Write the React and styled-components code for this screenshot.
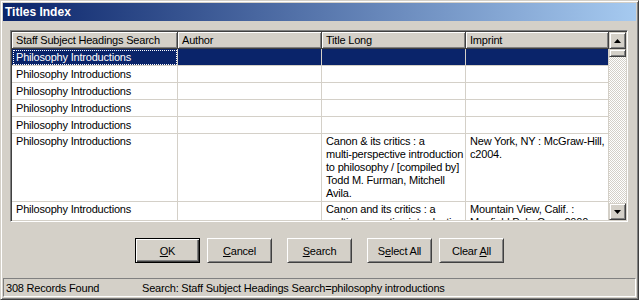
import styled, { createGlobalStyle } from "styled-components";

const GlobalStyle = createGlobalStyle`
  body {
    margin: 0;
    background: #d4d0c8;
    font-family: "Liberation Sans", Arial, sans-serif;
    font-size: 11px;
    color: #000;
  }
`;

const FACE = "#d4d0c8";
const SHADOW = "#808080";
const DARK = "#404040";

const Window = styled.div`
  box-sizing: border-box;
  width: 639px;
  height: 300px;
  padding: 2px;
  border: 1px solid;
  border-color: ${FACE} ${DARK} ${DARK} ${FACE};
  box-shadow: inset 1px 1px #fff, inset -1px -1px ${SHADOW};
  background: ${FACE};
  display: flex;
  flex-direction: column;
`;

const TitleBar = styled.div`
  height: 18px;
  flex: none;
  display: flex;
  align-items: center;
  padding-left: 2px;
  background: linear-gradient(to right, #0a246a, #a6caf0);
  color: #fff;
  font-weight: bold;
  font-size: 12px;
`;

const GridFrame = styled.div`
  box-sizing: border-box;
  height: 192px;
  margin: 9px 8px 0 7px;
  padding: 1px;
  border: 1px solid;
  border-color: ${SHADOW} #fff #fff ${SHADOW};
  box-shadow: inset 1px 1px ${DARK}, inset -1px -1px ${FACE};
  display: flex;
  flex: none;
`;

const Table = styled.div`
  flex: 1;
  overflow: hidden;
  background: #fff;
  letter-spacing: -0.2px;
`;

const Row = styled.div`
  display: grid;
  grid-template-columns: 166px 144px 144px 143px;
  height: ${(p) => p.$h}px;
  background: ${(p) => (p.$selected ? "#0a246a" : "#fff")};
  color: ${(p) => (p.$selected ? "#fff" : "#000")};
`;

const HeadCell = styled.div`
  box-sizing: border-box;
  height: 17px;
  padding: 0 4px;
  display: flex;
  align-items: center;
  background: ${FACE};
  border-right: 1px solid ${DARK};
  border-bottom: 1px solid ${DARK};
  box-shadow: inset 1px 1px #fff, inset -1px -1px ${SHADOW};
  white-space: nowrap;
  overflow: hidden;
`;

const Cell = styled.div`
  box-sizing: border-box;
  padding: ${(p) => (p.$multi ? "1px 3px 0 4px" : "0 3px 0 4px")};
  display: flex;
  flex-direction: column;
  justify-content: ${(p) => (p.$multi ? "flex-start" : "center")};
  line-height: 13px;
  border-right: 1px solid ${FACE};
  border-bottom: 1px solid ${FACE};
  white-space: nowrap;
  overflow: hidden;
  outline: ${(p) => (p.$focus ? "1px dotted #fff" : "none")};
  outline-offset: -2px;
`;

const Scrollbar = styled.div`
  width: 17px;
  flex: none;
  display: flex;
  flex-direction: column;
`;

const Raised = styled.div`
  box-sizing: border-box;
  width: 17px;
  height: ${(p) => p.$h}px;
  flex: none;
  border: 1px solid;
  border-color: ${FACE} ${DARK} ${DARK} ${FACE};
  box-shadow: inset 1px 1px #fff, inset -1px -1px ${SHADOW};
  background: ${FACE};
  display: flex;
  align-items: center;
  justify-content: center;
`;

const Track = styled.div`
  flex: 1;
  background: repeating-conic-gradient(#fff 0 25%, ${FACE} 0 50%) 0 0 / 2px 2px;
`;

const ButtonRow = styled.div`
  height: 25px;
  margin-top: 16px;
  display: flex;
  justify-content: center;
  flex: none;
`;

const Button = styled.button`
  box-sizing: border-box;
  width: 65px;
  height: 25px;
  margin-left: ${(p) => p.$gap || 0}px;
  padding: 0;
  font-family: "Liberation Sans", Arial, sans-serif;
  font-size: 11px;
  letter-spacing: -0.2px;
  color: #000;
  background: ${FACE};
  border: 1px solid;
  border-color: ${(p) => (p.$default ? "#000" : `#fff ${DARK} ${DARK} #fff`)};
  box-shadow: ${(p) =>
    p.$default
      ? `inset 1px 1px #fff, inset -1px -1px ${DARK}, inset -2px -2px ${SHADOW}`
      : `inset 1px 1px ${FACE}, inset -1px -1px ${SHADOW}`};
  cursor: pointer;

  u {
    text-decoration: underline;
  }
`;

const StatusBar = styled.div`
  box-sizing: border-box;
  height: 19px;
  margin-top: 15px;
  border: 1px solid;
  border-color: ${SHADOW} #fff #fff ${SHADOW};
  display: flex;
  align-items: center;
  padding-left: 2px;
  letter-spacing: -0.2px;
  flex: none;
`;

const StatusText = styled.span`
  width: ${(p) => p.$w || "auto"};
  white-space: nowrap;
`;

const Arrow = ({ down }) => (
  <svg width="7" height="4" viewBox="0 0 7 4">
    <polygon points={down ? "0,0 7,0 3.5,4" : "0,4 7,4 3.5,0"} fill="#000" />
  </svg>
);

const rows = [
  { h: 17, selected: true, cells: [["Philosophy Introductions"], [], [], []] },
  { h: 17, cells: [["Philosophy Introductions"], [], [], []] },
  { h: 17, cells: [["Philosophy Introductions"], [], [], []] },
  { h: 17, cells: [["Philosophy Introductions"], [], [], []] },
  { h: 17, cells: [["Philosophy Introductions"], [], [], []] },
  {
    h: 68,
    multi: true,
    cells: [
      ["Philosophy Introductions"],
      [],
      [
        "Canon & its critics : a",
        "multi-perspective introduction",
        "to philosophy / [compiled by]",
        "Todd M. Furman, Mitchell",
        "Avila.",
      ],
      ["New York, NY : McGraw-Hill,", "c2004."],
    ],
  },
  {
    h: 68,
    multi: true,
    cells: [
      ["Philosophy Introductions"],
      [],
      ["Canon and its critics : a", "multi-perspective introduction"],
      ["Mountain View, Calif. :", "Mayfield Pub. Co., c2000."],
    ],
  },
];

const headers = ["Staff Subject Headings Search", "Author", "Title Long", "Imprint"];

export default function App() {
  return (
    <>
      <GlobalStyle />
      <Window>
        <TitleBar>Titles Index</TitleBar>
        <GridFrame>
          <Table>
            <Row $h={17}>
              {headers.map((h) => (
                <HeadCell key={h}>{h}</HeadCell>
              ))}
            </Row>
            {rows.map((row, i) => (
              <Row key={i} $h={row.h} $selected={row.selected}>
                {row.cells.map((lines, j) => (
                  <Cell key={j} $multi={row.multi} $focus={row.selected && j === 0}>
                    {lines.map((l) => (
                      <div key={l}>{l}</div>
                    ))}
                  </Cell>
                ))}
              </Row>
            ))}
          </Table>
          <Scrollbar>
            <Raised $h={17}>
              <Arrow />
            </Raised>
            <Raised $h={8} />
            <Track />
            <Raised $h={17}>
              <Arrow down />
            </Raised>
          </Scrollbar>
        </GridFrame>
        <ButtonRow>
          <Button $default>
            <u>O</u>K
          </Button>
          <Button $gap={7}>
            <u>C</u>ancel
          </Button>
          <Button $gap={15}>
            <u>S</u>earch
          </Button>
          <Button $gap={15}>
            S<u>e</u>lect All
          </Button>
          <Button $gap={7}>
            Clear <u>A</u>ll
          </Button>
        </ButtonRow>
        <StatusBar>
          <StatusText $w="136px">308 Records Found</StatusText>
          <StatusText>Search: Staff Subject Headings Search=philosophy introductions</StatusText>
        </StatusBar>
      </Window>
    </>
  );
}
